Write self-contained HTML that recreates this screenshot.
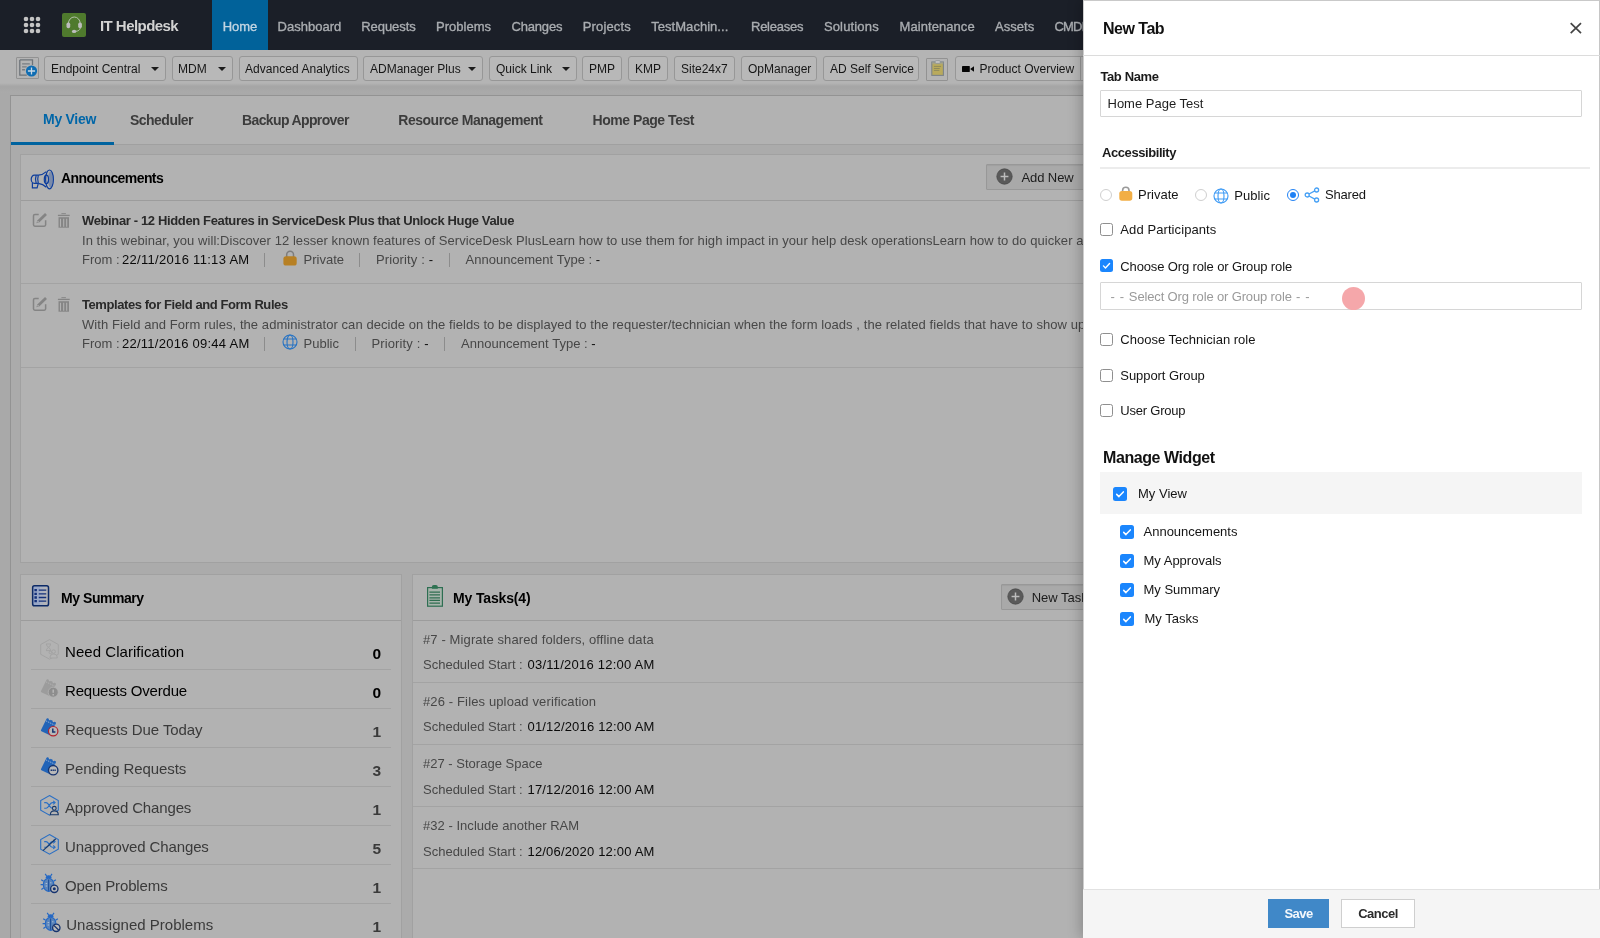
<!DOCTYPE html>
<html lang="en">
<head>
<meta charset="utf-8">
<title>IT Helpdesk - New Tab</title>
<style>
*{box-sizing:border-box}
html,body{margin:0;padding:0}
body{width:1600px;height:938px;overflow:hidden;position:relative;background:#a9a9a9;font-family:"Liberation Sans",sans-serif;font-size:13px;color:#222}
.abs{position:absolute}
#nav,#tools,#main,#panel{will-change:transform}
svg{display:block}
#nav{position:absolute;left:0;top:0;width:1600px;height:50px;background:#1b1f28}
#nav .grid{position:absolute;left:23px;top:16px;width:18px;height:18px}
#nav .logo{position:absolute;left:62px;top:13px;width:24px;height:24px;background:#4f7a2d;border-radius:2px}
#nav .brand{position:absolute;left:100px;top:0;line-height:51px;font-size:15px;font-weight:bold;color:#d2d2d2;white-space:nowrap;letter-spacing:-.55px}
#nav ul{position:absolute;left:212px;top:0;margin:0;padding:0;list-style:none;height:50px}
#nav li{position:absolute;top:0;height:50px;padding:0 10px;line-height:53px;font-size:13px;color:#a9acb0;white-space:nowrap;-webkit-text-stroke:.35px #a9acb0}
#nav li.on{background:#01629a;color:#c3d5e2;-webkit-text-stroke-color:#c3d5e2;left:0!important;width:56px;padding:0;text-align:center}
#tools{position:absolute;left:0;top:50px;width:1600px;height:34px;background:#b4b4b4}
#tools::after{content:"";position:absolute;left:0;top:33px;width:100%;height:10px;background:linear-gradient(#b4b4b4 0%,#a6a6a6 32%,#a6a6a6 45%,#aaaaaa 100%)}
#tools .b{position:absolute;top:6px;height:25px;border:1px solid #979797;border-radius:3px;background:#b8b8b8;font-size:12px;line-height:25px;color:#161616;padding-left:6px;white-space:nowrap}
#tools .car{position:absolute;top:17px;width:0;height:0;border-left:4px solid transparent;border-right:4px solid transparent;border-top:4px solid #1a1a1a}
#main{position:absolute;left:10px;top:95px;width:1600px;height:860px;border:1px solid #939393;background:#ababab}
#tabs{position:absolute;left:0;top:0;width:100%;height:49px;background:#b2b2b2;border-bottom:1px solid #a0a0a0}
#tabs span{position:absolute;top:1px;line-height:47px;font-size:14px;font-weight:bold;color:#3c3c3c;white-space:nowrap;letter-spacing:-.3px}
#tabs span.on{color:#0066a8;top:0}
#tabs i{position:absolute;left:0;top:46px;width:103px;height:3px;background:#00639f}
.card{position:absolute;background:#b2b2b2;border:1px solid #a1a1a1}
.card .hd{position:absolute;left:0;top:0;right:0;height:46px;border-bottom:1px solid #9c9c9c}
.card .hd b{position:absolute;top:0;line-height:46px;font-size:14px;color:#000;white-space:nowrap;letter-spacing:-.5px}
.btn{position:absolute;height:26px;border:1px solid #989898;background:#a9a9a9;border-radius:1px;box-shadow:inset 0 1px 1px rgba(0,0,0,.06);font-size:13px;line-height:25px;color:#1c1c1c;white-space:nowrap}
.t{position:absolute;white-space:nowrap;line-height:16px}
.at{font-weight:bold;color:#2a2a2a}
.ad{color:#474747}
.dk{color:#0a0a0a}
.vs{position:absolute;width:1px;height:14px;background:#8c8c8c}
.sep{position:absolute;height:1px;background:#a3a3a3}
.sl{font-size:15px;color:#3a3a3a;line-height:18px}
.sn{font-size:15.5px;font-weight:bold;color:#3a3a3a;line-height:18px}
.z{color:#000}

#panel{position:absolute;left:1083px;top:0;width:517px;height:938px;background:#fff;box-shadow:inset 1px 0 0 #cdcdcd,-3px 0 12px rgba(0,0,0,.21);border-top:1px solid #c9c9c9;border-right:1px solid #c6c6c6;color:#1f1f1f}
#panel .ph{position:absolute;left:0;top:0;width:517px;height:55px;border-bottom:1px solid #dcdcdc}
#panel h2{position:absolute;left:20px;top:18px;margin:0;font-size:16px;line-height:20px;font-weight:bold;color:#111;letter-spacing:-.5px;white-space:nowrap}
#panel .lb{position:absolute;white-space:nowrap;font-size:13px;line-height:16px;font-weight:bold;color:#1a1a1a;letter-spacing:-.38px}
#panel .tx{position:absolute;white-space:nowrap;font-size:13px;line-height:16px;color:#151515}
#panel .inp{position:absolute;left:17px;width:482px;border:1px solid #d6d6d6;border-radius:1px;background:#fff;font-size:13px;color:#1f1f1f;padding-left:6.5px;white-space:nowrap}
#panel .hr{position:absolute;left:17px;top:166px;width:490px;height:2px;background:#ececec}
#panel .rd{position:absolute;width:12px;height:12px;border:1px solid #cfcfcf;border-radius:50%;background:#fff}
#panel .rd.on{border-color:#2383f5}
#panel .rd.on::after{content:"";position:absolute;left:2px;top:2px;width:6px;height:6px;border-radius:50%;background:#1e80f5}
#panel .cb{position:absolute;width:13px;height:13px;border:1px solid #8f8f8f;border-radius:2.5px;background:#fff}
#panel .cb.on{border:none;background:#1b86fd}
#panel .cb svg{position:absolute;left:0;top:0}
#panel .bar{position:absolute;left:17px;top:471px;width:482px;height:42px;background:#f5f5f5}
#panel .ft{position:absolute;left:0;top:888px;width:517px;height:50px;background:#f5f5f5;border-top:1px solid #e2e2e2}
#panel .sv{position:absolute;left:185px;top:9px;width:61px;height:29px;background:#4088c8;color:#f4f8fc;font-size:13px;font-weight:bold;line-height:29px;text-align:center;letter-spacing:-.55px}
#panel .cn{position:absolute;left:258px;top:9px;width:74px;height:29px;background:#fff;border:1px solid #cfcfcf;color:#2c2c2c;font-size:13px;font-weight:bold;line-height:27px;text-align:center;letter-spacing:-.5px}
#panel .dot{position:absolute;left:259px;top:286px;width:23px;height:23px;border-radius:50%;background:#f5a7aa}
</style>
</head>
<body>
<div id="nav">
<svg class="grid" viewBox="0 0 18 18"><g fill="#c4c4c4"><circle cx="3" cy="3" r="2.3"/><circle cx="9" cy="3" r="2.3"/><circle cx="15" cy="3" r="2.3"/><circle cx="3" cy="9" r="2.3"/><circle cx="9" cy="9" r="2.3"/><circle cx="15" cy="9" r="2.3"/><circle cx="3" cy="15" r="2.3"/><circle cx="9" cy="15" r="2.3"/><circle cx="15" cy="15" r="2.3"/></g></svg>
<div class="logo"><svg width="24" height="24" viewBox="0 0 24 24"><path d="M6.4 10.6a5.9 6.6 0 0 1 11.8 0" fill="none" stroke="#b4c0ac" stroke-width="1"/><rect x="4.5" y="9.5" width="3.7" height="5.7" rx="1.7" fill="#bdbdbd"/><rect x="16.2" y="9.5" width="3.7" height="5.7" rx="1.7" fill="#bdbdbd"/><path d="M18.4 14.8c-.5 2.3-2.2 3.3-4.6 3.5" fill="none" stroke="#b4c0ac" stroke-width="1"/><ellipse cx="12.1" cy="18.4" rx="2.2" ry="1.6" fill="#bdbdbd"/></svg></div>
<div class="brand">IT Helpdesk</div>
<ul><li class="on" style="left:0.6px;letter-spacing:0.003px">Home</li><li style="left:55.6px;letter-spacing:0.01px">Dashboard</li><li style="left:139.2px;letter-spacing:-0.04px">Requests</li><li style="left:214.1px;letter-spacing:-0.003px">Problems</li><li style="left:289.4px;letter-spacing:-0.15px">Changes</li><li style="left:360.7px;letter-spacing:0.166px">Projects</li><li style="left:429.3px;letter-spacing:0.031px">TestMachin...</li><li style="left:529px;letter-spacing:-0.25px">Releases</li><li style="left:601.9px;letter-spacing:0.157px">Solutions</li><li style="left:677.5px;letter-spacing:0.068px">Maintenance</li><li style="left:773px;letter-spacing:0.031px">Assets</li><li style="left:832.5px;letter-spacing:-0.82px">CMDB</li></ul>
</div>
<div id="tools">
<div class="b ic" style="left:16px;width:23px;top:7px;height:22px;padding:0;background:none;border-radius:1px;border-color:#929292"><svg width="21" height="20" viewBox="0 1 21 20"><path d="M2.8 2.9h12.7v5M2.8 2.9v15.2h7" fill="none" stroke="#6e747a" stroke-width="1.3"/><path d="M5.1 6.9h7.7M5.1 9.9h4.6M5.1 12.8h3" stroke="#777d83" stroke-width="1.4"/><circle cx="14.5" cy="14" r="5.6" fill="#0f6db3"/><path d="M14.5 10.4v7.2M10.9 14h7.2" stroke="#c9d8e3" stroke-width="1.3"/></svg></div>
<div class="b" style="left:44px;width:122px">Endpoint Central</div><i class="car" style="left:151px"></i>
<div class="b" style="left:172px;width:61px;padding-left:5px">MDM</div><i class="car" style="left:218px"></i>
<div class="b" style="left:239px;width:119px;padding-left:5px;letter-spacing:.04px">Advanced Analytics</div>
<div class="b" style="left:363px;width:120px">ADManager Plus</div><i class="car" style="left:468px"></i>
<div class="b" style="left:489px;width:88px">Quick Link</div><i class="car" style="left:562px"></i>
<div class="b" style="left:582px;width:40px">PMP</div>
<div class="b" style="left:628px;width:40px">KMP</div>
<div class="b" style="left:674px;width:61px">Site24x7</div>
<div class="b" style="left:741px;width:76px">OpManager</div>
<div class="b" style="left:823px;width:96px">AD Self Service</div>
<div class="b ic" style="left:926px;width:22px;top:8px;height:23px;padding:0;background:none;border-radius:1px;border-color:#929292"><svg width="20" height="21" viewBox="0 0 20 21"><rect x="4.8" y="3" width="11.6" height="13.4" fill="#b9aa5c" stroke="#7c8489" stroke-width="1.1"/><path d="M4.8 3h11.6v2.2H4.8z" fill="#9aa0a0" opacity=".55"/><rect x="8" y="1.7" width="5.4" height="2.6" rx="1.2" fill="#c9c9c9" stroke="#8a9094" stroke-width=".8"/><path d="M6.9 7.4h7.2M6.9 9.5h5.8M6.9 11.4h5.4" stroke="#8e8a5a" stroke-width="1"/></svg></div>
<div class="b" style="left:955px;width:126px;padding-left:23.5px;border-radius:3px 0 0 3px">Product Overview</div><div class="b" style="left:1080px;width:60px;border-radius:0"></div>
<svg class="abs" style="left:961px;top:13px" width="14" height="12" viewBox="0 0 14 12"><rect x="1" y="3" width="7.8" height="6" rx=".4" fill="#050505"/><path d="M9.1 6l3.9-2.8v5.6z" fill="#050505"/></svg>
</div>
<div id="main">
<div id="tabs"><span class="on" style="left:32px;letter-spacing:-0.286px">My View</span><span style="left:119px;letter-spacing:-0.523px">Scheduler</span><span style="left:231px;letter-spacing:-0.629px">Backup Approver</span><span style="left:387.3px;letter-spacing:-0.478px">Resource Management</span><span style="left:581.5px;letter-spacing:-0.456px">Home Page Test</span><i></i></div>
<div class="card" id="ann" style="left:9px;top:58px;width:1590px;height:409px">
<div class="hd"><svg class="abs" style="left:8px;top:13px" width="26" height="22" viewBox="0 0 26 22"><g fill="none" stroke="#0d3d9c" stroke-width="1.2"><ellipse cx="20.5" cy="11.4" rx="3.9" ry="9.4"/><path d="M9.3 7.2C12 7 15 5.8 17.4 3.6M9.3 15.4C12 15.7 15 16.9 17.4 19.2"/><path d="M9.3 7.2H5.4a3.2 4.1 0 0 0 0 8.2h3.9"/><path d="M7.2 7.2q-1.6 4.1 0 8.2M9.3 7.2q-1.2 4.1 0 8.2"/><ellipse cx="17.4" cy="11.4" rx="2.1" ry="4.2"/><path d="M3.4 15v4.8h4.7l1.2-4.4"/></g><ellipse cx="21.4" cy="11.4" rx="2.4" ry="7.8" fill="#0d3d9c" fill-opacity=".33"/></svg><b style="left:40px;letter-spacing:-.58px">Announcements</b></div>
<div class="btn" style="left:965px;top:9px;width:110px;padding-left:34.5px;letter-spacing:-.1px">Add New<svg class="abs" style="left:9px;top:3px" width="17" height="17" viewBox="0 0 16 16"><circle cx="8" cy="8" r="7.2" fill="#5a5a5a" stroke="#4b4b4b" stroke-width=".8"/><path d="M8 4.3v7.400M4.300 8h7.400" stroke="#bdbdbd" stroke-width="1.400"/></svg></div>
<svg class="abs" style="left:11px;top:58px" width="16" height="16" viewBox="0 0 16 16"><path d="M6.7 1.45H2.9a1.4 1.4 0 0 0-1.4 1.4v9a1.4 1.400 0 0 0 1.400 1.400h9.350a1.400 1.400 0 0 0 1.400-1.400V7.200" fill="none" stroke="#848484" stroke-width="1.500"/><path d="M14 1.100L6.500 8.200" stroke="#848484" stroke-width="2.800"/><path d="M4.400 10.300l1-3.200 2.200 2.100z" fill="#848484"/><circle cx="6" cy="8.700" r=".7" fill="#b8b8b8"/></svg>
<svg class="abs" style="left:36px;top:58px" width="14" height="16" viewBox="0 0 14 16"><path d="M.9 2.400H12.700" stroke="#848484" stroke-width="1.300"/><path d="M4.400 .6H8.900" stroke="#8c8c8c" stroke-width="1.100"/><rect x="1.500" y="4.200" width="10.500" height="10.500" fill="#858585"/><path d="M3.500 5.700v8.100M6.700 5.700v8.100M9.700 5.700v8.100" stroke="#b1b1b1" stroke-width="1.100"/></svg>
<div class="t at" style="left:61px;top:58px;letter-spacing:-0.363px">Webinar - 12 Hidden Features in ServiceDesk Plus that Unlock Huge Value</div>
<div class="t ad" style="left:61px;top:78px;letter-spacing:0.055px">In this webinar, you will:Discover 12 lesser known features of ServiceDesk PlusLearn how to use them for high impact in your help desk operationsLearn how to do quicker and smarter ticket resolution</div>
<div class="t ad" style="left:61px;top:97px">From :</div>
<div class="t dk" style="left:101px;top:97px;letter-spacing:0.307px">22/11/2016 11:13 AM</div>
<i class="vs" style="left:243px;top:98px"></i>
<svg class="abs" style="left:262px;top:94.5px" width="14" height="16" viewBox="0 0 14 16"><path d="M3.7 7V4.6a3.4 3.4 0 0 1 6.8 0V7" fill="none" stroke="#7d7d7d" stroke-width="1.5"/><rect x=".4" y="6.3" width="13.3" height="9.2" rx="2.6" fill="#b78024"/></svg>
<div class="t ad" style="left:282.5px;top:97px;letter-spacing:0.004px">Private</div>
<i class="vs" style="left:338px;top:98px"></i>
<div class="t ad" style="left:354.9px;top:97px;letter-spacing:0.148px">Priority : <span class="dk">-</span></div>
<i class="vs" style="left:427.7px;top:98px"></i>
<div class="t ad" style="left:444.5px;top:97px;letter-spacing:0.024px">Announcement Type : <span class="dk">-</span></div>
<i class="sep" style="left:0px;top:128px;width:1590px"></i>
<svg class="abs" style="left:11px;top:142px" width="16" height="16" viewBox="0 0 16 16"><path d="M6.7 1.45H2.9a1.4 1.4 0 0 0-1.4 1.4v9a1.4 1.400 0 0 0 1.400 1.400h9.350a1.400 1.400 0 0 0 1.400-1.400V7.200" fill="none" stroke="#848484" stroke-width="1.500"/><path d="M14 1.100L6.500 8.200" stroke="#848484" stroke-width="2.800"/><path d="M4.400 10.300l1-3.200 2.200 2.100z" fill="#848484"/><circle cx="6" cy="8.700" r=".7" fill="#b8b8b8"/></svg>
<svg class="abs" style="left:36px;top:142px" width="14" height="16" viewBox="0 0 14 16"><path d="M.9 2.400H12.700" stroke="#848484" stroke-width="1.300"/><path d="M4.400 .6H8.900" stroke="#8c8c8c" stroke-width="1.100"/><rect x="1.500" y="4.200" width="10.500" height="10.500" fill="#858585"/><path d="M3.500 5.700v8.100M6.700 5.700v8.100M9.700 5.700v8.100" stroke="#b1b1b1" stroke-width="1.100"/></svg>
<div class="t at" style="left:61px;top:142px;letter-spacing:-0.423px">Templates for Field and Form Rules</div>
<div class="t ad" style="left:61px;top:162px;letter-spacing:0.068px">With Field and Form rules, the administrator can decide on the fields to be displayed to the requester/technician when the form loads , the related fields that have to show up on selecting a field</div>
<div class="t ad" style="left:61px;top:181px">From :</div>
<div class="t dk" style="left:101px;top:181px;letter-spacing:0.256px">22/11/2016 09:44 AM</div>
<i class="vs" style="left:243px;top:182px"></i>
<svg class="abs" style="left:260.5px;top:178.5px" width="16" height="16" viewBox="0 0 16 16"><g fill="none" stroke="#2673c4" stroke-width="1.1"><circle cx="8" cy="8" r="7"/><ellipse cx="8" cy="8" rx="3" ry="7"/><path d="M1.7 5h12.6M1.7 11h12.6"/></g></svg>
<div class="t ad" style="left:282.5px;top:181px;letter-spacing:0.013px">Public</div>
<i class="vs" style="left:333.5px;top:182px"></i>
<div class="t ad" style="left:350.4px;top:181px;letter-spacing:0.148px">Priority : <span class="dk">-</span></div>
<i class="vs" style="left:423.2px;top:182px"></i>
<div class="t ad" style="left:440px;top:181px;letter-spacing:0.024px">Announcement Type : <span class="dk">-</span></div>
<i class="sep" style="left:0px;top:212px;width:1590px"></i>
</div>
<div class="card" id="sum" style="left:9px;top:478px;width:382px;height:400px">
<div class="hd"><svg class="abs" style="left:10px;top:9px" width="20" height="24" viewBox="0 0 20 24"><rect x="1.65" y="1.85" width="15.85" height="20" rx="1.8" fill="#98a7c7"/><rect x="9" y="2.5" width="4" height="18.700" fill="#aab1c1"/><rect x="12.500" y="2.500" width="4.600" height="18.700" fill="#b4b5b8"/><rect x="1.650" y="1.850" width="15.850" height="20" rx="1.800" fill="none" stroke="#0d2a66" stroke-width="1.500"/><path d="M3.400 6.100h2.500M3.400 9.900h2.500M3.400 13.500h2.500M3.400 17.200h2.500" stroke="#14317a" stroke-width="2.300"/><path d="M7.750 6.100h7.500M7.750 9.900h7.500M7.750 13.500h7.500M7.750 17.200h7.500" stroke="#14317a" stroke-width="1.300"/></svg><b style="left:40px;letter-spacing:-.45px">My Summary</b></div>
<svg class="abs" style="left:18.5px;top:64px" width="20" height="21" viewBox="0 0 20 21"><g fill="none" stroke="#a3a3a3" stroke-width="1"><path d="M9.5 .6L18.3 5.5V15.3L9.5 20.2L.7 15.3V5.5Z"/><path d="M6 5h5M6 11.6h5M6.4 5c0 2 1.4 2.6 2.1 3.3C9.200 7.600 10.600 7 10.600 5M6.400 11.600c0-2 1.400-2.600 2.100-3.300c.7.700 2.100 1.300 2.100 3.300"/><circle cx="13.600" cy="12.600" r="1.800" fill="#b3b3b3"/><path d="M10 19c0-3 1.600-3.900 3.600-3.900s3.600.9 3.600 3.900z" fill="#b3b3b3"/><circle cx="10.400" cy="13.400" r="1.300"/></g></svg>
<div class="t sl z" style="left:44px;top:67.5px;letter-spacing:0.048px">Need Clarification</div>
<div class="t sn z" style="left:339px;top:69.5px;width:21px;text-align:right">0</div>
<i class="sep" style="left:10px;top:94px;width:360px"></i>
<svg class="abs" style="left:18.5px;top:103px" width="20" height="21" viewBox="0 0 20 21"><g transform="rotate(26 8.5 9.7)"><rect x="3.25" y="2.6" width="10.5" height="14.2" rx=".8" fill="#9c9c9c"/><circle cx="6.4" cy="2.5" r="1" fill="#b3b3b3"/><circle cx="10.6" cy="2.5" r="1" fill="#b3b3b3"/><path d="M3.6 5.6h9.8" stroke="#b3b3b3" stroke-width=".8" stroke-dasharray="1.4 .9"/></g><circle cx="13.2" cy="14.2" r="5" fill="#8d8d8d" stroke="#b3b3b3" stroke-width=".8"/><path d="M13.2 11.400v3.400M13.2 16.1v1.300" stroke="#b9b9b9" stroke-width="1.400"/></svg>
<div class="t sl z" style="left:44px;top:106.5px;letter-spacing:-0.192px">Requests Overdue</div>
<div class="t sn z" style="left:339px;top:108.5px;width:21px;text-align:right">0</div>
<i class="sep" style="left:10px;top:133px;width:360px"></i>
<svg class="abs" style="left:18.5px;top:142px" width="20" height="21" viewBox="0 0 20 21"><g transform="rotate(26 8.5 9.7)"><rect x="3.25" y="2.6" width="10.5" height="14.2" rx=".8" fill="#2264b8"/><circle cx="6.4" cy="2.5" r="1" fill="#b3b3b3"/><circle cx="10.6" cy="2.5" r="1" fill="#b3b3b3"/><path d="M3.6 5.6h9.8" stroke="#9db4d4" stroke-width=".8" stroke-dasharray="1.4 .9"/></g><circle cx="13.2" cy="14.2" r="4.700" fill="#b8b8b8" stroke="#b2212b" stroke-width="1.200"/><path d="M12.8 11.600v3.300h2.600" stroke="#16336e" stroke-width="1.500" fill="none"/></svg>
<div class="t sl" style="left:44px;top:145.5px;letter-spacing:-0.082px">Requests Due Today</div>
<div class="t sn" style="left:339px;top:147.5px;width:21px;text-align:right">1</div>
<i class="sep" style="left:10px;top:172px;width:360px"></i>
<svg class="abs" style="left:18.5px;top:181px" width="20" height="21" viewBox="0 0 20 21"><g transform="rotate(26 8.5 9.7)"><rect x="3.25" y="2.6" width="10.5" height="14.2" rx=".8" fill="#2264b8"/><circle cx="6.4" cy="2.5" r="1" fill="#b3b3b3"/><circle cx="10.6" cy="2.5" r="1" fill="#b3b3b3"/><path d="M3.6 5.6h9.8" stroke="#9db4d4" stroke-width=".8" stroke-dasharray="1.4 .9"/></g><circle cx="13.2" cy="14.2" r="4.700" fill="#b8b8b8" stroke="#16336e" stroke-width="1.400"/><path d="M10.600 14.2h5.400" stroke="#16336e" stroke-width="1.600" stroke-dasharray="1.400 .5"/></svg>
<div class="t sl" style="left:44px;top:184.5px;letter-spacing:-0.084px">Pending Requests</div>
<div class="t sn" style="left:339px;top:186.5px;width:21px;text-align:right">3</div>
<i class="sep" style="left:10px;top:211px;width:360px"></i>
<svg class="abs" style="left:18.5px;top:220px" width="20" height="21" viewBox="0 0 20 21"><g fill="none" stroke="#2a6fc4" stroke-width="1.100"><path d="M9.5 .6L18.3 5.5V15.3L9.5 20.2L.7 15.3V5.5Z"/><path d="M4.2 7.6h2c2.6 0 3.4 5.6 6 5.6h2.3M4.2 13.2h2c2.6 0 3.4-5.6 6-5.6h2.3" /><path d="M13.2 5.9l1.9 1.7-1.9 1.7M13.2 11.5l1.9 1.7-1.9 1.7"/></g><g fill="#b3b3b3" stroke="#1a3a6a" stroke-width="1.100"><path d="M10.300 19.800c0-3 1.800-3.900 4-3.900s4 .9 4 3.900z"/><circle cx="14.300" cy="13.300" r="1.900"/></g></svg>
<div class="t sl" style="left:44px;top:223.5px;letter-spacing:-0.137px">Approved Changes</div>
<div class="t sn" style="left:339px;top:225.5px;width:21px;text-align:right">1</div>
<i class="sep" style="left:10px;top:250px;width:360px"></i>
<svg class="abs" style="left:18.5px;top:259px" width="20" height="21" viewBox="0 0 20 21"><g fill="none" stroke="#2a6fc4" stroke-width="1.100"><path d="M9.5 .6L18.3 5.5V15.3L9.5 20.2L.7 15.3V5.5Z"/><path d="M4.2 7.6h2c2.6 0 3.4 5.6 6 5.6h2.3M4.2 13.2h2c2.6 0 3.4-5.6 6-5.6h2.3" /><path d="M13.2 5.9l1.9 1.7-1.9 1.7M13.2 11.5l1.9 1.7-1.9 1.7"/></g><path d="M3 16.600L15.800 4.800" stroke="#1a3a6a" stroke-width="1.200"/></svg>
<div class="t sl" style="left:44px;top:262.5px;letter-spacing:-0.122px">Unapproved Changes</div>
<div class="t sn" style="left:339px;top:264.5px;width:21px;text-align:right">5</div>
<i class="sep" style="left:10px;top:289px;width:360px"></i>
<svg class="abs" style="left:19.3px;top:298px" width="20" height="21" viewBox="0 0 20 21"><g stroke="#2468c4" stroke-width="1.2" fill="none"><path d="M6.6 3l-1.4-2.1M10.6 3L12 .9M3.7 8.3L1.2 6.8M3.3 11.6H.6M3.8 14.8l-2.4 1.7M13.5 8.3l2.4-1.5"/></g><path d="M5.6 5.2a3 3 0 0 1 6 0z" fill="#2468c4"/><ellipse cx="8.6" cy="11.8" rx="5.3" ry="6.6" fill="#5a84ba" stroke="#2468c4" stroke-width="1.1"/><path d="M8.6 6.4v11.4" stroke="#1d4f9a" stroke-width="1.1"/><path d="M5.6 10.6h1.6M5.6 13h1.6M10.2 9.8h1.2" stroke="#b3c3d8" stroke-width="1"/><circle cx="14.300" cy="15.800" r="3.700" fill="#b9b9b9" stroke="#16336e" stroke-width="1.300"/><circle cx="14.300" cy="15.800" r="1.500" fill="#16336e"/></svg>
<div class="t sl" style="left:44px;top:301.5px;letter-spacing:-0.132px">Open Problems</div>
<div class="t sn" style="left:339px;top:303.5px;width:21px;text-align:right">1</div>
<i class="sep" style="left:10px;top:328px;width:360px"></i>
<svg class="abs" style="left:20.55px;top:337px" width="20" height="21" viewBox="0 0 20 21"><g stroke="#2468c4" stroke-width="1.2" fill="none"><path d="M6.6 3l-1.4-2.1M10.6 3L12 .9M3.7 8.3L1.2 6.8M3.3 11.6H.6M3.8 14.8l-2.4 1.7M13.5 8.3l2.4-1.5"/></g><path d="M5.6 5.2a3 3 0 0 1 6 0z" fill="#2468c4"/><ellipse cx="8.6" cy="11.8" rx="5.3" ry="6.6" fill="#5a84ba" stroke="#2468c4" stroke-width="1.1"/><path d="M8.6 6.4v11.4" stroke="#1d4f9a" stroke-width="1.1"/><path d="M5.6 10.6h1.6M5.6 13h1.6M10.2 9.8h1.2" stroke="#b3c3d8" stroke-width="1"/><circle cx="14.300" cy="15.800" r="3.700" fill="#b9b9b9" stroke="#16336e" stroke-width="1.300"/><path d="M11.800 13.400l5 4.800" stroke="#16336e" stroke-width="1.300"/></svg>
<div class="t sl" style="left:45.25px;top:340.5px;letter-spacing:0.013px">Unassigned Problems</div>
<div class="t sn" style="left:339px;top:342.5px;width:21px;text-align:right">1</div>
<i class="sep" style="left:10px;top:367px;width:360px"></i>
</div>
<div class="card" id="tasks" style="left:401px;top:478px;width:1200px;height:400px">
<div class="hd"><svg class="abs" style="left:13px;top:9px" width="18" height="23" viewBox="0 0 18 23"><rect x="1.6" y="3.6" width="14.8" height="18.600" fill="#a8b4ac" stroke="#2d6e52" stroke-width="1.200"/><path d="M5.900 4.700V2.800a1.900 1.900 0 0 1 1.900-1.900h2.100a1.900 1.900 0 0 1 1.900 1.900V4.700z" fill="#2f7252"/><path d="M3.400 8.100H14M3.400 10.900H14M3.400 13.800H14M3.400 16.400H14M3.400 19.100H14" stroke="#2f6e50" stroke-width="1.300"/></svg><b style="left:40px;letter-spacing:-0.146px">My Tasks(4)</b></div>
<div class="btn" style="left:588px;top:9px;width:110px;padding-left:29.7px">New Task<svg class="abs" style="left:4.8px;top:3px" width="17" height="17" viewBox="0 0 16 16"><circle cx="8" cy="8" r="7.2" fill="#5a5a5a" stroke="#4b4b4b" stroke-width=".8"/><path d="M8 4.3v7.400M4.300 8h7.400" stroke="#bdbdbd" stroke-width="1.400"/></svg></div>
<div class="t ad" style="left:10px;top:57px;letter-spacing:0.117px">#7 - Migrate shared folders, offline data</div>
<div class="t ad" style="left:10px;top:82px">Scheduled Start :</div>
<div class="t dk" style="left:114.5px;top:82px;letter-spacing:0.229px">03/11/2016 12:00 AM</div>
<i class="sep" style="left:0px;top:107px;width:1200px"></i>
<div class="t ad" style="left:10px;top:119px;letter-spacing:0.132px">#26 - Files upload verification</div>
<div class="t ad" style="left:10px;top:144px">Scheduled Start :</div>
<div class="t dk" style="left:114.5px;top:144px;letter-spacing:0.178px">01/12/2016 12:00 AM</div>
<i class="sep" style="left:0px;top:169px;width:1200px"></i>
<div class="t ad" style="left:10px;top:181px;letter-spacing:0.008px">#27 - Storage Space</div>
<div class="t ad" style="left:10px;top:206.5px">Scheduled Start :</div>
<div class="t dk" style="left:114.5px;top:206.5px;letter-spacing:0.178px">17/12/2016 12:00 AM</div>
<i class="sep" style="left:0px;top:231px;width:1200px"></i>
<div class="t ad" style="left:10px;top:243px;letter-spacing:0.033px">#32 - Include another RAM</div>
<div class="t ad" style="left:10px;top:268.5px">Scheduled Start :</div>
<div class="t dk" style="left:114.5px;top:268.5px;letter-spacing:0.178px">12/06/2020 12:00 AM</div>
<i class="sep" style="left:0px;top:293px;width:1200px"></i>
</div>
</div>
<div id="panel">
<div class="ph"><h2>New Tab</h2><svg class="abs" style="left:486px;top:20.500px" width="14" height="13" viewBox="0 0 14 13"><path d="M1.700 1.200l10.300 10M12 1.200l-10.300 10" stroke="#444" stroke-width="1.700"/></svg></div>
<span class="lb" style="left:17.4px;top:67.5px;letter-spacing:-0.371px">Tab Name</span>
<div class="inp" style="top:89px;height:27px;line-height:25px">Home Page Test</div>
<span class="lb" style="left:19px;top:143.5px;letter-spacing:-0.423px">Accessibility</span>
<i class="hr"></i>
<span class="rd" style="left:17px;top:188px"></span>
<svg class="abs" style="left:36px;top:185px" width="14" height="16" viewBox="0 0 14 16"><path d="M3.6 6.6V4.4a3.2 3.2 0 0 1 6.4 0V6.6" fill="none" stroke="#9a9a9a" stroke-width="1.6"/><rect x=".3" y="4.9" width="13" height="9.8" rx="2.6" fill="#f2ae45"/></svg>
<span class="tx" style="left:55px;top:185.5px;letter-spacing:0.019px">Private</span>
<span class="rd" style="left:112px;top:188px"></span>
<svg class="abs" style="left:130px;top:186.5px" width="16" height="16" viewBox="0 0 16 16"><g fill="none" stroke="#409cf5" stroke-width="1.15"><circle cx="8" cy="8" r="7"/><ellipse cx="8" cy="8" rx="3" ry="7"/><path d="M1.7 5h12.6M1.7 11h12.6"/></g></svg>
<span class="tx" style="left:151.3px;top:186.5px;letter-spacing:0.046px">Public</span>
<span class="rd on" style="left:204px;top:188px"></span>
<svg class="abs" style="left:221px;top:186px" width="16" height="16" viewBox="0 0 16 16"><g fill="none" stroke="#46a0f5" stroke-width="1.3"><circle cx="3.2" cy="8" r="2"/><circle cx="12.6" cy="3" r="2"/><circle cx="12.6" cy="13" r="2"/><path d="M5 7l5.800-3.100M5 9l5.800 3.100"/></g></svg>
<span class="tx" style="left:242px;top:185.5px;letter-spacing:-0.187px">Shared</span>
<span class="cb" style="left:17px;top:222px"></span>
<span class="tx" style="left:37.3px;top:220.5px;letter-spacing:0.089px">Add Participants</span>
<span class="cb on" style="left:17px;top:258px;width:13px;height:13px"><svg width="13" height="13" viewBox="0 0 14 14"><path d="M3.700 7.400l2.200 2.200 4.400-4.700" fill="none" stroke="#fff" stroke-width="1.500" stroke-linecap="round" stroke-linejoin="round"/></svg></span>
<span class="tx" style="left:37.3px;top:257.5px;letter-spacing:-0.134px">Choose Org role or Group role</span>
<div class="inp" style="top:281px;height:28px;line-height:28px;color:#9a9a9a;padding-left:9.5px"><span style="letter-spacing:0.615px">- - </span><span style="letter-spacing:-0.138px">Select Org role or Group role</span><span style="letter-spacing:0.615px"> - -</span></div>
<i class="dot"></i>
<span class="cb" style="left:17px;top:332px"></span>
<span class="tx" style="left:37.3px;top:330.5px;letter-spacing:0.013px">Choose Technician role</span>
<span class="cb" style="left:17px;top:368px"></span>
<span class="tx" style="left:37.3px;top:366.5px;letter-spacing:-0.06px">Support Group</span>
<span class="cb" style="left:17px;top:403px"></span>
<span class="tx" style="left:37.3px;top:402px;letter-spacing:-0.22px">User Group</span>
<span class="lb" style="left:20px;top:447px;font-size:16px;line-height:20px;letter-spacing:-0.423px;color:#111">Manage Widget</span>
<i class="bar"></i>
<span class="cb on" style="left:30px;top:485.5px;width:14px;height:14px"><svg width="14" height="14" viewBox="0 0 14 14"><path d="M3.700 7.400l2.200 2.200 4.400-4.700" fill="none" stroke="#fff" stroke-width="1.500" stroke-linecap="round" stroke-linejoin="round"/></svg></span>
<span class="tx" style="left:55px;top:484.5px">My View</span>
<span class="cb on" style="left:37px;top:524px;width:14px;height:14px"><svg width="14" height="14" viewBox="0 0 14 14"><path d="M3.700 7.400l2.200 2.200 4.400-4.700" fill="none" stroke="#fff" stroke-width="1.500" stroke-linecap="round" stroke-linejoin="round"/></svg></span>
<span class="tx" style="left:60.5px;top:523px">Announcements</span>
<span class="cb on" style="left:37px;top:552.5px;width:14px;height:14px"><svg width="14" height="14" viewBox="0 0 14 14"><path d="M3.700 7.400l2.200 2.200 4.400-4.700" fill="none" stroke="#fff" stroke-width="1.500" stroke-linecap="round" stroke-linejoin="round"/></svg></span>
<span class="tx" style="left:60.5px;top:551.5px">My Approvals</span>
<span class="cb on" style="left:37px;top:581.7px;width:14px;height:14px"><svg width="14" height="14" viewBox="0 0 14 14"><path d="M3.700 7.400l2.200 2.200 4.400-4.700" fill="none" stroke="#fff" stroke-width="1.500" stroke-linecap="round" stroke-linejoin="round"/></svg></span>
<span class="tx" style="left:60.5px;top:580.7px">My Summary</span>
<span class="cb on" style="left:37px;top:610.8px;width:14px;height:14px"><svg width="14" height="14" viewBox="0 0 14 14"><path d="M3.700 7.400l2.200 2.200 4.400-4.700" fill="none" stroke="#fff" stroke-width="1.500" stroke-linecap="round" stroke-linejoin="round"/></svg></span>
<span class="tx" style="left:61.5px;top:609.8px">My Tasks</span>
<div class="ft"><span class="sv">Save</span><span class="cn">Cancel</span></div>
</div>
</body>
</html>
